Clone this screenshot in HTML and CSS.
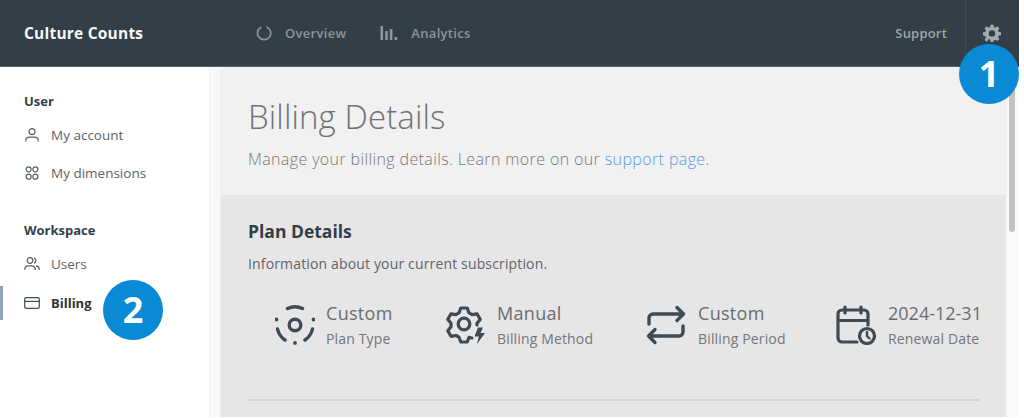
FILE: index.html
```html
<!DOCTYPE html>
<html lang="en">
<head>
<meta charset="utf-8">
<title>Billing Details</title>
<link rel="stylesheet" href="styles.css">
</head>
<body>
<div class="app">
  <header class="topbar">
    <div class="brand">Culture Counts</div>
    <nav class="mainnav">
      <a class="navlink">
        <svg class="navicon" viewBox="0 0 16 16" fill="none" stroke="#8b969c" stroke-width="1.7"><path d="M5.2 2.2A6.6 6.6 0 1 0 10.6 2"/></svg>
        Overview</a>
      <a class="navlink">
        <svg class="navicon" viewBox="0 0 18 16" fill="#8b969c"><rect x="0.5" y="1" width="2.6" height="14"/><rect x="5.2" y="6" width="2.6" height="9"/><rect x="9.8" y="4" width="2.6" height="11"/><rect x="14.6" y="12" width="2.6" height="3"/></svg>
        Analytics</a>
    </nav>
    <a class="support">Support</a>
    <div class="settings">
      <svg class="gear" viewBox="0 0 24 24"><path fill="#a3aaae" fill-rule="evenodd" d="M10 1h4l.6 3.1 1.8.8L19 3.1 21.9 6l-1.8 2.6.8 1.8L24 11v4l-3.1.4-.8 1.9 1.8 2.6-2.9 2.9-2.6-1.8-1.8.8L14 24h-4l-.6-3.2-1.8-.8L5 23.800 2.100 20.900l1.800-2.600-.8-1.900L0 15v-4l3.100-.6.8-1.800L2.100 6 5 3.100l2.600 1.800 1.800-.8zM12 8.200a4.300 4.300 0 1 0 0 8.600 4.300 4.300 0 0 0 0-8.600z"/></svg>
    </div>
  </header>
  <div class="body">
    <aside class="sidebar">
      <h4 class="sidehead">User</h4>
      <a class="sideitem">
        <svg class="sideicon" viewBox="0 0 16 16" fill="none" stroke="#555f66" stroke-width="1.200"><circle cx="8" cy="4.600" r="3"/><path d="M1.800 14.500v-.8a3.600 3.600 0 0 1 3.600-3.500h5.200a3.600 3.600 0 0 1 3.600 3.500v.8"/></svg>
        My account</a>
      <a class="sideitem">
        <svg class="sideicon" viewBox="0 0 16 16" fill="none" stroke="#555f66" stroke-width="1.200"><circle cx="4.600" cy="4.300" r="2.500"/><circle cx="11.400" cy="4.300" r="2.500"/><circle cx="4.600" cy="11.700" r="2.500"/><circle cx="11.400" cy="11.700" r="2.500"/></svg>
        My dimensions</a>
      <h4 class="sidehead second">Workspace</h4>
      <a class="sideitem">
        <svg class="sideicon" viewBox="0 0 16 16" fill="none" stroke="#555f66" stroke-width="1.200"><circle cx="6" cy="4.500" r="2.800"/><path d="M.8 14v-1a3.500 3.500 0 0 1 3.500-3.200h3.400A3.500 3.500 0 0 1 11.200 13v1M10 1.900a2.800 2.800 0 0 1 0 5.300M12 9.900a3.400 3.400 0 0 1 3.200 3.200v.9"/></svg>
        Users</a>
      <a class="sideitem active">
        <svg class="sideicon" viewBox="0 0 16 16" fill="none" stroke="#3f4a52" stroke-width="1.200"><rect x=".7" y="2.600" width="14.600" height="10.800" rx="1.500"/><path d="M.7 6.400h14.600"/></svg>
        Billing</a>
    </aside>
    <div class="gutter"></div>
    <main class="content">
      <section class="hero">
        <h1 class="title">Billing Details</h1>
        <p class="lead">Manage your billing details. Learn more on our <a class="link">support page</a>.</p>
      </section>
      <section class="plan">
        <h2 class="plantitle">Plan Details</h2>
        <p class="plansub">Information about your current subscription.</p>
        <div class="stats">
          <div class="stat s1">
            <svg class="staticon" viewBox="0 0 40 40" fill="none" stroke="#3f4a54" stroke-width="3.400" stroke-linecap="round"><circle cx="20" cy="20" r="5.800"/><path d="M12.500 3.500a18 18 0 0 1 15 0M2.500 24a18 18 0 0 0 7.500 11M37.500 24a18 18 0 0 1-7.500 11"/><path d="M1.500 14.500h.01M38.500 14.500h.01M20 38h.01" stroke-width="3.800"/></svg>
            <div><div class="statval">Custom</div><div class="statlab">Plan Type</div></div>
          </div>
          <div class="stat s2">
            <svg class="staticon" viewBox="0 0 40 40" fill="none" stroke="#3f4a54" stroke-width="3.200" stroke-linejoin="round" stroke-linecap="round"><circle cx="19" cy="19" r="5.800"/><path d="M27 33l-3-.6-1.800 4.600h-6.400l-1.800-4.800-3-1.700-5 .8-3.200-5.600 3.200-3.900v-3.500L2.800 14.400 6 8.800l5 .8 3-1.700L15.800 3h6.400l1.800 4.900 3 1.700 5-.8 3.200 5.600-3.200 3.900v1.700"/><path fill="#3f4a54" stroke="none" d="M33 22.500h5l-2.500 5.500h4.500L32 39l1.800-7.500h-4.300z"/></svg>
            <div><div class="statval">Manual</div><div class="statlab">Billing Method</div></div>
          </div>
          <div class="stat s3">
            <svg class="staticon" viewBox="0 0 40 40" fill="none" stroke="#3f4a54" stroke-width="3.400" stroke-linecap="round" stroke-linejoin="round"><path d="M3 19v-6a4 4 0 0 1 4-4h30M31 2.500l6.500 6.500-6.500 6.500M37 21v6a4 4 0 0 1-4 4H3M9 24.500L2.500 31 9 37.500"/></svg>
            <div><div class="statval">Custom</div><div class="statlab">Billing Period</div></div>
          </div>
          <div class="stat s4">
            <svg class="staticon" viewBox="0 0 42 40" fill="none" stroke="#3f4a54" stroke-width="3.200" stroke-linecap="round" stroke-linejoin="round"><path d="M22 37H7a4 4 0 0 1-4-4V9a4 4 0 0 1 4-4h22a4 4 0 0 1 4 4v11M3 15.500h30M10 2v6M26 2v6"/><circle cx="32" cy="31" r="7.500"/><path d="M32 27v4l2.500 2.500" stroke-width="2.400"/></svg>
            <div><div class="statval date">2024-12-31</div><div class="statlab">Renewal Date</div></div>
          </div>
        </div>
        <hr class="rule">
      </section>
    </main>
    <div class="scrolltrack"><div class="scrollthumb"></div></div>
  </div>
</div>
<div class="badge b1">1</div>
<div class="badge b2">2</div>
</body>
</html>
```
FILE: styles.css
```css
html, body { margin: 0; height: 100%; background: #fff; overflow: hidden; }
body { font-family: "Open Sans", sans-serif; position: relative; }
a { text-decoration: none; }
.app { width: 1019px; height: 417px; display: flex; flex-direction: column; }
.topbar { height: 66px; flex: none; background: #333f48; border-bottom: 1px solid #56626a; display: flex; align-items: center; padding-left: 24px; }
.brand { color: #f6f7f7; font-size: 15.500px; font-weight: 700; width: 227px; letter-spacing: .22px; }
.mainnav { display: flex; gap: 34px; flex: 1; }
.navlink { display: flex; align-items: center; gap: 13px; color: #8b969c; font-size: 13px; font-weight: 600; letter-spacing: .3px; margin-left: 5px; }
.navlink + .navlink { margin-left: 0; }
.navicon { height: 16px; width: auto; }
.support { color: #9ea6ab; font-size: 13px; font-weight: 600; letter-spacing: .2px; margin-right: 18px; }
.settings { width: 54px; height: 66px; border-left: 1px solid #3f4a52; box-sizing: border-box; display: flex; align-items: center; padding-left: 17px; }
.gear { width: 18px; height: 18px; }
.body { flex: 1; display: flex; min-height: 0; }
.sidebar { width: 209px; flex: none; border-right: 1px solid #efefef; padding-top: 26px; }
.sidehead { margin: 0 0 7px 24px; font-size: 13px; font-weight: 700; color: #333f48; line-height: 16px; }
.sidehead.second { margin-top: 30px; }
.sideitem { display: flex; align-items: center; gap: 11px; height: 38px; padding-left: 24px; color: #5c6368; font-size: 13.500px; box-sizing: border-box; }
.sideitem.active { color: #333; font-weight: 700; border-left: 3px solid #8fa3bd; padding-left: 21px; height: 34px; margin-top: 3px; font-size: 13px; }
.sideicon { width: 16px; height: 16px; flex: none; }
.gutter { width: 10px; flex: none; background: #f8f8f8; border-right: 1px solid #eee; }
.content { flex: 1; min-width: 0; display: flex; flex-direction: column; border-right: 1px solid #f4f4f4; }
.hero { height: 128px; flex: none; background: #f1f1f1; padding: 29px 0 0 27px; box-sizing: border-box; }
.title { margin: 0; font-size: 33px; line-height: 42px; font-weight: 300; color: #6f7376; letter-spacing: .1px; }
.lead { margin: 10px 0 0; font-size: 16px; line-height: 22px; font-weight: 300; color: #777; letter-spacing: .38px; }
.link { color: #5f97e6; }
.plan { flex: 1; background: #e6e6e6; padding: 24px 26px 0 27px; min-height: 0; }
.plantitle { margin: 0; font-size: 17.500px; line-height: 24px; font-weight: 700; color: #333f48; }
.plansub { margin: 11px 0 0; font-size: 14px; line-height: 20px; color: #5f6468; letter-spacing: .15px; }
.stats { display: flex; margin-top: 27px; height: 48px; align-items: center; }
.stat { display: flex; align-items: center; flex: none; }
.staticon { width: 40px; height: 40px; flex: none; }
.s1 { margin-left: 27px; gap: 11px; width: 170px; }
.s2 { gap: 12px; width: 201px; }
.s3 { gap: 12px; width: 189px; }
.s4 { gap: 11px; }
.s4 .staticon { width: 42px; }
.statval { font-size: 18px; line-height: 24px; color: #696d70; letter-spacing: .3px; white-space: nowrap; }
.statval.date { letter-spacing: 0; }
.statlab { font-size: 14px; line-height: 20px; margin-top: 4px; color: #73777a; letter-spacing: .15px; white-space: nowrap; }
.rule { margin: 50px 0 0; border: 0; border-top: 2px solid #d6d6d6; }
.scrolltrack { width: 12px; flex: none; background: #fafafa; }
.scrollthumb { width: 6px; height: 165px; margin-left: 2px; background: #c2c2c2; border-radius: 0 0 3px 3px; }
.badge { position: absolute; width: 60px; height: 60px; border-radius: 50%; background: #0a8ad4; color: #fff; font-family: "Open Sans", sans-serif; font-weight: 700; font-size: 36px; line-height: 60px; text-align: center; }
.b1 { left: 959px; top: 44px; }
.b2 { left: 103px; top: 280px; }
```
